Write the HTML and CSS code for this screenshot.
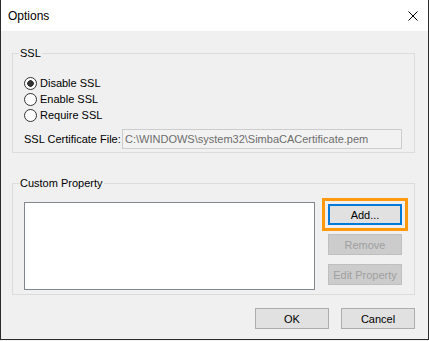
FILE: index.html
```html
<!DOCTYPE html>
<html lang="en">
<head>
    <meta charset="UTF-8">
    <meta name="viewport" content="width=device-width, initial-scale=1.0">
    <title>Options</title>
    <link rel="stylesheet" href="styles.css">
</head>
<body>
    <div class="window">
        <div class="titlebar">
            <span class="title">Options</span>
            <svg class="close" width="10" height="10" viewBox="0 0 10 10">
                <path d="M0.5 0.5 L9.5 9.5 M9.5 0.5 L0.5 9.5" stroke="#000" stroke-width="1" fill="none"/>
            </svg>
        </div>

        <div class="dialog">
            <fieldset class="group ssl">
                <legend>SSL</legend>
                <div class="radios">
                    <label class="radio"><input type="radio" name="ssl" checked> Disable SSL</label>
                    <label class="radio"><input type="radio" name="ssl"> Enable SSL</label>
                    <label class="radio"><input type="radio" name="ssl"> Require SSL</label>
                </div>
                <div class="cert-row">
                    <span class="cert-label">SSL Certificate File:</span>
                    <input type="text" class="cert-input" value="C:\WINDOWS\system32\SimbaCACertificate.pem" disabled>
                </div>
            </fieldset>

            <fieldset class="group custom">
                <legend>Custom Property</legend>
                <div class="custom-row">
                    <div class="listbox"></div>
                    <div class="side-buttons">
                        <button class="btn btn-default">Add...</button>
                        <button class="btn" disabled>Remove</button>
                        <button class="btn" disabled>Edit Property</button>
                    </div>
                </div>
            </fieldset>

            <div class="footer">
                <button class="btn">OK</button>
                <button class="btn">Cancel</button>
            </div>
        </div>
    </div>
</body>
</html>
```

FILE: styles.css
```css
html {
    background-color: #f0f0f0;
}

body {
    margin: 0;
    font-family: "Liberation Sans", Arial, sans-serif;
    font-size: 11px;
    color: #000;
}

.window {
    width: 429px;
    height: 340px;
    box-sizing: border-box;
    border: 1px solid #2b2b2b;
    border-top: none;
    display: flex;
    flex-direction: column;
}

.titlebar {
    height: 31px;
    flex: none;
    background-color: #fff;
    display: flex;
    align-items: center;
    justify-content: space-between;
    padding: 0 10px 0 7px;
}

.title {
    font-size: 12px;
}

.close {
    display: block;
}

.dialog {
    flex: 1;
    background-color: #f0f0f0;
    padding: 0 0 0 11px;
}

.group {
    width: 403px;
    box-sizing: border-box;
    margin: 0;
    padding: 0 12px 0 11px;
    border: 1px solid #dcdcdc;
    min-inline-size: 0;
}

.group legend {
    margin-left: -5px;
    padding: 0 1px;
    line-height: 13px;
}

.ssl {
    margin-top: 16px;
    padding-bottom: 3px;
}

.radios {
    padding-top: 15px;
    display: flex;
    flex-direction: column;
}

.radio {
    height: 16px;
    display: flex;
    align-items: center;
    gap: 3px;
}

.radio input {
    appearance: none;
    -webkit-appearance: none;
    margin: 0;
    width: 13px;
    height: 13px;
    box-sizing: border-box;
    border: 1px solid #333;
    border-radius: 50%;
    background-color: #fff;
}

.radio input:checked {
    background: radial-gradient(circle, #333 0, #333 3px, #fff 3.6px);
}

.cert-row {
    margin-top: 6px;
    display: flex;
    align-items: center;
}

.cert-label {
    width: 98px;
    flex: none;
}

.cert-input {
    flex: 1;
    height: 20px;
    box-sizing: border-box;
    margin: 0;
    padding: 0 2px;
    border: 1px solid #ccc;
    background-color: #f2f2f2;
    color: #6d6d6d;
    font-family: inherit;
    font-size: 11px;
}

.custom {
    margin-top: 24px;
    padding-top: 12px;
    padding-bottom: 4px;
}

.custom-row {
    display: flex;
    gap: 13px;
}

.listbox {
    width: 294px;
    height: 88px;
    box-sizing: border-box;
    background-color: #fff;
    border: 1px solid #828790;
}

.side-buttons {
    margin-top: 2px;
    display: flex;
    flex-direction: column;
    gap: 9px;
}

.btn {
    width: 74px;
    height: 21px;
    box-sizing: border-box;
    margin: 0;
    padding: 0;
    border: 1px solid #adadad;
    background-color: #e1e1e1;
    font-family: inherit;
    font-size: 11px;
    color: #000;
}

.btn:disabled {
    background-color: #ccc;
    border-color: #bfbfbf;
    color: #a0a0a0;
}

.btn-default {
    border: 2px solid #0078d7;
    outline: 3px solid #ff9a0e;
    outline-offset: 3px;
}

.footer {
    width: 403px;
    margin-top: 13px;
    display: flex;
    justify-content: flex-end;
    gap: 12px;
}
```
